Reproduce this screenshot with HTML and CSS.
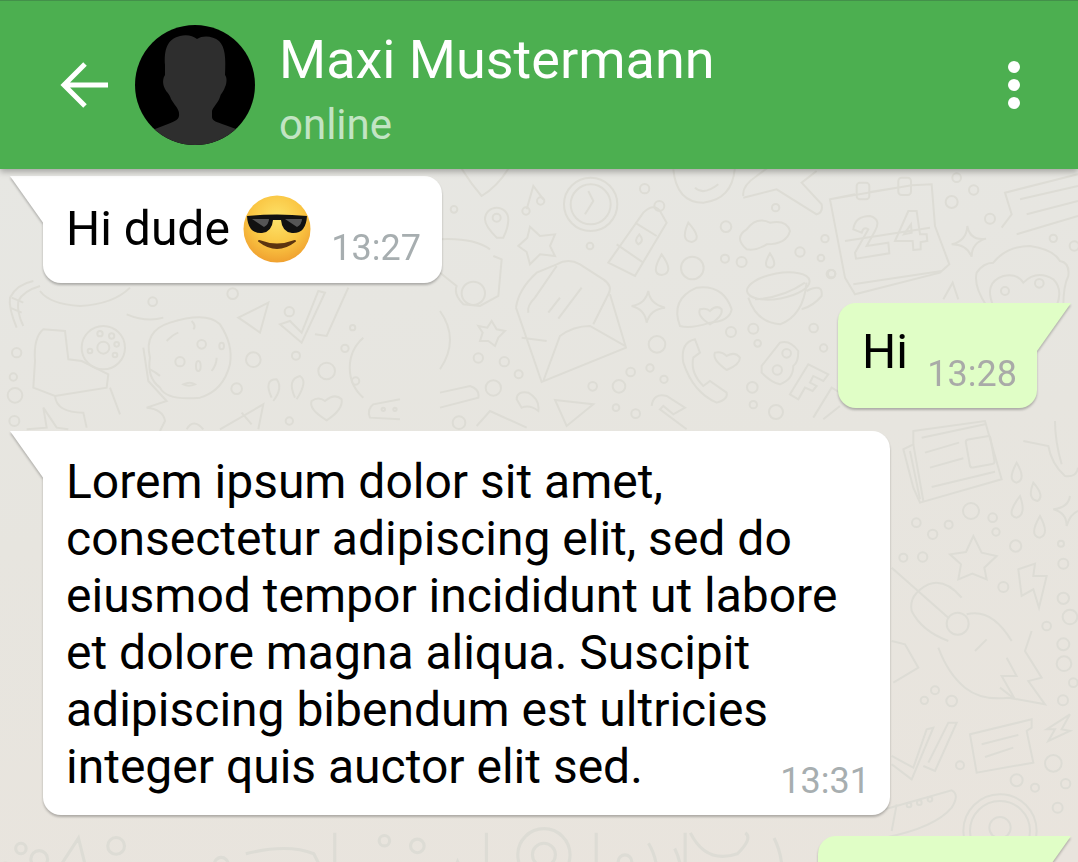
FILE: index.html
```html
<!DOCTYPE html>
<html lang="de">
<head>
    <meta charset="UTF-8">
    <meta name="viewport" content="width=device-width, initial-scale=1.0">
    <title>Maxi Mustermann</title>
    <link rel="stylesheet" href="styles.css">
</head>
<body>
    <header class="topbar">
        <svg class="back-icon" width="50" height="50" viewBox="0 0 50 50">
            <path d="M48 25H5M25 4L4 25l21 21" fill="none" stroke="#fff" stroke-width="5"/>
        </svg>
        <svg class="avatar" width="120" height="120" viewBox="0 0 120 120">
            <defs><clipPath id="avatarClip"><circle cx="60" cy="60" r="60"/></clipPath></defs>
            <circle cx="60" cy="60" r="60" fill="#000"/>
            <path clip-path="url(#avatarClip)" fill="#2e2e2e" d="M30 40C29 25 32 14 45 11C52 9 58 11 62 14C68 10 78 11 84 16C90 22 91 32 90 50C92 52 92 58 90 62C88 68 86 68 85 72C83 78 78 82 77 86V92C77 96 82 97 90 100L101 104L120 120H0L20 104L33 99C40 96 45 95 44 88C44 84 38 78 36 74C34 68 32 68 30 64C27 58 28 53 30 50Z"/>
        </svg>
        <div class="contact">
            <div class="contact-name">Maxi Mustermann</div>
            <div class="contact-status">online</div>
        </div>
        <div class="menu-dots"><span></span><span></span><span></span></div>
    </header>

    <main class="chat">
        <!-- Hintergrundmuster -->
        <svg class="wallpaper" width="1078" height="694" viewBox="0 168 1078 694" fill="none" stroke="#dddcd5" stroke-width="6">
            <g transform="translate(440 165) scale(.3333)">
                <path d="M228 425L305 648L558 545L510 385M245 515L320 525M310 645L360 510Q400 480 450 480L555 540M228 425Q235 370 290 320L350 295Q385 275 420 295L490 340Q520 360 505 385L460 475M265 440Q260 420 285 395L350 300M325 440L360 395M355 458L425 365"/>
                <path d="M270 182L300 210L345 205L330 240L345 270L300 265L270 295L260 258L235 240L262 215Z"/>
                <path d="M155 465L170 490L195 495L175 515L165 540L145 525L120 525L128 500L115 480L142 485Z"/>
                <circle cx="452" cy="115" r="80"/><circle cx="452" cy="115" r="60"/>
                <path d="M445 75L460 105L435 145M260 130L280 60L310 100"/>
                <circle cx="258" cy="135" r="11"/><circle cx="302" cy="105" r="11"/>
                <path d="M170 215Q135 180 135 160a35 35 0 1 1 70 0Q205 185 190 215Z"/><circle cx="170" cy="155" r="12"/>
                <path d="M505 290L610 140Q640 110 660 135L680 170L585 330ZM530 235L610 290M585 170L650 210M598 205Q580 225 595 235Q615 225 598 205Z"/>
                <circle cx="658" cy="120" r="15"/>
                <path d="M745 170Q720 225 755 228Q790 220 745 170ZM665 265Q630 325 665 327Q705 320 665 265ZM990 262Q965 305 992 305Q1015 300 990 262Z"/>
                <path d="M920 250Q880 215 920 190Q950 150 990 170Q1040 160 1050 195Q1040 235 980 235Q950 255 920 250Z"/>
                <ellipse cx="1015" cy="360" rx="95" ry="38" transform="rotate(-10 1015 360)"/>
                <path d="M925 395Q950 470 1020 475Q1090 450 1100 350M1100 375Q1150 350 1145 390Q1120 420 1085 430M945 400Q1030 395 1095 350"/>
                <path d="M625 375Q630 415 675 425Q630 430 620 470Q615 430 575 420Q615 415 625 375Z"/>
                <path d="M720 480Q690 400 770 365Q850 355 875 430Q870 465 810 470Q750 490 720 480Z"/>
                <path d="M810 475Q770 450 780 430Q800 425 810 435Q830 415 845 430Q850 450 810 475Z"/>
                <path d="M765 520Q720 530 730 590Q760 680 830 710Q865 700 860 680L810 645L790 660Q750 620 760 575L780 560Z"/>
                <path d="M860 612Q815 580 825 560Q845 555 860 570Q885 555 900 575Q900 595 860 612Z"/>
                <path d="M965 600L1020 530Q1050 520 1075 555Q1075 590 1060 600Q1060 640 1020 655Q995 650 965 620Z"/><circle cx="1040" cy="562" r="13"/><circle cx="1012" cy="612" r="14"/>
                <path d="M1050 685L1105 595L1165 625L1150 645L1120 630L1110 650L1130 660L1118 675L1095 665L1075 700Z"/>
                <path d="M1120 755L1175 665L1200 680M1150 760L1200 720"/>
                <path d="M0 680L90 660Q120 670 115 695L0 725M230 700Q230 675 265 680Q300 700 295 735Q270 715 245 725ZM345 702L460 715L380 780Z"/>
                <path d="M635 720Q640 680 680 690L735 725L700 745L670 720L660 730L740 790"/>
                <path d="M0 220Q100 215 150 250M160 270L185 280L175 390L120 420L70 415Q40 385 50 360L0 320"/><circle cx="100" cy="382" r="35"/>
                <path d="M110 780L150 735L260 785M0 435Q60 520 0 610"/>
                <path d="M60 0Q90 50 125 90Q175 60 210 0M700 10Q710 110 790 110Q880 100 885 0M765 65Q790 90 835 55M910 90Q905 60 950 30L990 0M910 95L1010 70L1130 145Q1150 140 1145 115L1085 50L1130 15"/>
                <g>
                    <circle cx="42" cy="130" r="10"/><circle cx="614" cy="68" r="14"/><circle cx="450" cy="240" r="10"/><circle cx="858" cy="182" r="16"/><circle cx="1155" cy="218" r="11"/><circle cx="1080" cy="258" r="14"/><circle cx="855" cy="278" r="12"/><circle cx="905" cy="288" r="15"/><circle cx="1143" cy="276" r="10"/><circle cx="1173" cy="324" r="13"/><circle cx="1007" cy="125" r="11"/>
                    <circle cx="757" cy="306" r="34"/><circle cx="651" cy="535" r="25"/><circle cx="873" cy="498" r="15"/><circle cx="940" cy="488" r="15"/><circle cx="1121" cy="486" r="13"/><circle cx="953" cy="532" r="10"/><circle cx="1151" cy="546" r="11"/>
                    <circle cx="115" cy="576" r="14"/><circle cx="193" cy="587" r="14"/><circle cx="236" cy="625" r="12"/><circle cx="160" cy="666" r="23"/><circle cx="458" cy="661" r="13"/><circle cx="537" cy="661" r="19"/><circle cx="572" cy="618" r="13"/><circle cx="630" cy="606" r="11"/><circle cx="672" cy="640" r="11"/><circle cx="528" cy="725" r="10"/><circle cx="587" cy="743" r="13"/><circle cx="57" cy="770" r="19"/><circle cx="937" cy="664" r="16"/><circle cx="940" cy="716" r="11"/><circle cx="1008" cy="738" r="21"/>
                </g>
            </g>
            <g transform="translate(830 165) scale(.3333)">
                <path d="M0 100L75 85M120 78L200 65M245 58L305 55L315 180L358 295L330 320L75 385L45 335L0 100ZM45 225L300 185M70 355L335 315"/>
                <rect x="80" y="50" width="38" height="50" rx="10"/><rect x="205" y="35" width="38" height="52" rx="10"/>
                <path d="M70 190Q75 150 120 150Q155 160 135 195L110 240L175 230L178 262L78 278L75 260L115 190Q100 180 95 200ZM195 225L235 135L260 135L270 205L290 205L292 225L272 228L272 250L250 252L248 225ZM222 205L245 200L243 175Z"/>
                <path d="M412 180Q420 225 468 218Q425 230 425 272Q410 235 365 235Q410 225 412 180Z"/>
                <path d="M515 185L545 145L525 80L744 25M560 205L744 150M570 100L744 60M590 145L744 105Z"/>
                <path d="M470 420Q430 360 440 320Q460 290 490 290Q530 240 600 240Q670 250 690 285Q720 290 715 330Q700 360 700 420M490 420Q460 350 520 330Q560 320 580 350Q620 310 670 340Q700 370 680 420"/>
                <circle cx="525" cy="375" r="12"/><circle cx="628" cy="352" r="13"/>
                <path d="M340 400L368 350L385 400"/>
                <circle cx="365" cy="108" r="18"/><circle cx="431" cy="72" r="14"/><circle cx="480" cy="158" r="15"/><circle cx="380" cy="35" r="13"/><circle cx="670" cy="217" r="11"/><circle cx="733" cy="240" r="14"/><circle cx="5" cy="323" r="11"/>
            </g>
            <g transform="translate(885 420) scale(.3333)">
                <path d="M85 30L300 0L350 175L105 245L85 200L55 85L85 70Z"/>
                <path d="M110 50L300 10M120 95L222 65M135 140L235 112M140 198L330 152M85 70L115 240M75 90L105 235"/>
                <rect x="248" y="50" width="75" height="85" rx="8" transform="rotate(-10 285 92)"/>
                <path d="M395 125Q365 180 395 185Q425 175 395 125ZM405 225Q360 285 395 290Q425 280 405 225ZM445 185Q425 235 458 240Q480 225 445 185ZM465 285Q430 345 465 350Q495 340 465 285Z"/>
                <path d="M415 60L490 75Q500 130 540 165Q575 170 579 140M510 0Q510 60 530 130"/>
                <path d="M555 225Q550 260 505 265Q545 275 545 315Q555 280 579 270"/>
                <path d="M265 345L290 395L335 405L298 440L305 475L262 458L220 475L228 430L195 400L243 393Z"/>
                <path d="M400 445L450 428L445 465L485 465L462 560L445 505L410 525Z"/>
                <path d="M20 440L190 590M130 490Q70 520 80 570Q110 630 190 660M130 490Q180 470 230 530M245 580Q320 560 380 660"/>
                <circle cx="218" cy="608" r="33"/><circle cx="55" cy="410" r="12"/>
                <circle cx="258" cy="270" r="24"/><circle cx="94" cy="305" r="13"/><circle cx="143" cy="340" r="14"/><circle cx="191" cy="311" r="12"/><circle cx="323" cy="290" r="13"/><circle cx="333" cy="333" r="11"/><circle cx="392" cy="375" r="17"/><circle cx="113" cy="408" r="14"/><circle cx="355" cy="498" r="15"/><circle cx="528" cy="368" r="9"/><circle cx="535" cy="428" r="15"/><circle cx="535" cy="532" r="17"/><circle cx="555" cy="588" r="22"/><circle cx="485" cy="615" r="13"/>
            </g>
            <g transform="translate(885 630) scale(.3333)">
                <path d="M160 50Q190 130 240 170Q290 210 370 200L480 220L430 150L470 140L420 60L440 0M270 60L305 25M345 170L390 205L350 135L395 135L365 80"/>
                <path d="M25 155L100 110L60 40L20 30"/>
                <path d="M20 400L80 445L145 290L125 295L85 410L20 375M115 405L150 420L215 275L190 275L130 395"/>
                <path d="M255 310L440 265L440 290L425 300L445 395L275 425Z"/>
                <path d="M290 340L400 312M300 378L385 350"/>
                <path d="M485 295L555 250L530 295L555 300L490 330L510 295Z"/>
                <path d="M0 535L200 478Q225 490 200 530Q150 590 0 620M35 520L20 600"/>
                <circle cx="72" cy="522" r="7"/><circle cx="103" cy="515" r="7"/><circle cx="135" cy="505" r="7"/>
                <circle cx="345" cy="600" r="110"/><circle cx="345" cy="600" r="90"/><circle cx="345" cy="590" r="32"/>
                <circle cx="535" cy="40" r="18"/><circle cx="537" cy="98" r="22"/><circle cx="565" cy="155" r="13"/><circle cx="534" cy="208" r="15"/><circle cx="150" cy="178" r="12"/><circle cx="118" cy="208" r="11"/><circle cx="200" cy="210" r="16"/><circle cx="225" cy="403" r="12"/><circle cx="395" cy="448" r="18"/><circle cx="450" cy="470" r="12"/><circle cx="505" cy="397" r="25"/><circle cx="542" cy="458" r="14"/><circle cx="518" cy="530" r="15"/>
            </g>
            <g transform="translate(0 280) scale(.3333)">
                <path d="M50 140Q25 80 30 50Q50 10 100 0M70 135Q50 95 55 60Q70 30 120 15M30 80L65 95M35 50L70 65"/>
                <path d="M120 30Q150 70 240 75Q340 70 390 20M130 145Q100 170 105 240L100 320L165 345L320 320L325 280L245 240L205 235L195 150Z"/>
                <circle cx="310" cy="200" r="65"/><circle cx="310" cy="200" r="18"/><circle cx="300" cy="158" r="8"/><circle cx="335" cy="165" r="8"/><circle cx="350" cy="190" r="7"/><circle cx="270" cy="210" r="7"/><circle cx="345" cy="222" r="7"/>
                <path d="M165 345Q170 395 250 395L260 440M330 320L360 400M380 100Q440 125 490 110M430 200L445 300L500 360L440 380Q490 385 495 420L480 450"/>
                <path d="M450 230Q430 150 510 125Q620 90 660 130Q700 190 690 250Q670 330 600 350Q500 360 480 320Q440 290 450 230Z"/>
                <path d="M500 180Q520 160 535 155M450 265Q470 275 480 285M575 120Q590 135 580 145M635 270Q650 250 650 230"/><circle cx="605" cy="190" r="13"/><circle cx="540" cy="242" r="14"/><ellipse cx="595" cy="255" rx="7" ry="15"/><ellipse cx="665" cy="195" rx="7" ry="10"/><path d="M550 310Q570 300 585 310Q565 318 550 310Z"/>
                <path d="M715 110L805 65L780 155L745 130Z"/>
                <path d="M840 130L905 185L975 35L955 30L905 155L870 120ZM945 160L980 165L1045 20M1090 170A120 120 0 0 0 1090 350"/>
                <path d="M815 350Q790 295 830 295Q850 320 820 360M885 350Q860 295 900 285Q925 300 890 355"/>
                <path d="M980 418Q925 385 935 360Q955 345 975 360Q1005 335 1025 355Q1030 385 980 418Z"/>
                <path d="M1200 355L1120 370Q1100 385 1110 410L1200 415"/><circle cx="1150" cy="385" r="5"/><circle cx="1185" cy="385" r="5"/>
                <path d="M660 445L790 370L775 445M725 395L755 430"/>
                <path d="M80 445L140 440L130 380L170 440L205 445M560 445Q580 410 610 445"/>
                <circle cx="45" cy="343" r="22"/><circle cx="43" cy="420" r="15"/><circle cx="50" cy="215" r="14"/><circle cx="40" cy="288" r="11"/><circle cx="458" cy="62" r="13"/><circle cx="698" cy="38" r="16"/><circle cx="868" cy="92" r="14"/><circle cx="1058" cy="140" r="8"/><circle cx="760" cy="236" r="22"/><circle cx="888" cy="224" r="12"/><circle cx="980" cy="270" r="25"/><circle cx="1035" cy="202" r="11"/><circle cx="1067" cy="300" r="11"/><circle cx="710" cy="323" r="16"/><circle cx="868" cy="420" r="11"/>
            </g>
            <g transform="translate(0 790) scale(.523)">
                <circle cx="40" cy="110" r="10"/><circle cx="75" cy="130" r="16"/><circle cx="10" cy="148" r="10"/><circle cx="48" cy="180" r="10"/><circle cx="222" cy="105" r="16"/><circle cx="302" cy="150" r="11"/><circle cx="358" cy="148" r="9"/><circle cx="423" cy="140" r="13"/><circle cx="252" cy="172" r="7"/><circle cx="278" cy="195" r="8"/><circle cx="798" cy="105" r="13"/><circle cx="735" cy="95" r="10"/><circle cx="955" cy="185" r="9"/><circle cx="1195" cy="135" r="13"/>
                <path d="M85 190L150 90L165 150L110 190M470 120Q550 100 600 120L620 160M480 215Q460 150 520 150Q580 170 590 216M640 80V216M930 80V216M1140 80V216M1310 80V216M1480 90Q1510 150 1480 216"/>
                <circle cx="1040" cy="122" r="50"/><circle cx="1040" cy="122" r="22"/>
                <path d="M1215 216Q1280 170 1240 100M1270 216Q1320 170 1290 110M860 175L875 135L890 165L900 200L870 205L850 180ZM1320 80Q1350 140 1410 120Q1440 90 1425 80"/>
                <ellipse cx="735" cy="190" rx="13" ry="25"/><ellipse cx="770" cy="185" rx="13" ry="25"/>
            </g>
        </svg>

        <div class="msg msg-in msg-first">
            <div class="msg-row">
                <span class="msg-text">Hi dude</span>
                <svg class="emoji" width="68" height="68" viewBox="0 0 68 68">
                    <defs>
                        <radialGradient id="faceFill" cx="50%" cy="35%" r="70%">
                            <stop offset="0" stop-color="#fde36a"/>
                            <stop offset=".55" stop-color="#fac643"/>
                            <stop offset="1" stop-color="#ee9a2c"/>
                        </radialGradient>
                    </defs>
                    <circle cx="34" cy="34" r="33.5" fill="url(#faceFill)"/>
                    <path d="M4 21Q5 39 19 38Q29 37 30 25H38Q39 37 49 38Q63 39 64 21Q34 18 4 21Z" fill="#111"/>
                    <path d="M9 24H26Q26 29 21 32ZM42 24H59Q59 29 54 32Z" fill="#555"/>
                    <path d="M16 46Q34 60 52 46Q34 53 16 46Z" fill="#5c3410" stroke="#5c3410" stroke-width="2" stroke-linejoin="round"/>
                </svg>
                <span class="msg-time">13:27</span>
            </div>
        </div>

        <div class="msg msg-out">
            <div class="msg-row">
                <span class="msg-text">Hi</span>
                <span class="msg-time msg-time-out">13:28</span>
            </div>
        </div>

        <div class="msg msg-in msg-long">
            <div class="msg-text">Lorem ipsum dolor sit amet,<br>consectetur adipiscing elit, sed do<br>eiusmod tempor incididunt ut labore<br>et dolore magna aliqua. Suscipit<br>adipiscing bibendum est ultricies<br>integer quis auctor elit sed.</div>
            <span class="msg-time msg-time-end">13:31</span>
        </div>

        <div class="msg msg-out msg-cut"></div>
    </main>
</body>
</html>
```

FILE: styles.css
```css
html, body {
    margin: 0;
    height: 862px;
    overflow: hidden;
}
body {
    font-family: Roboto, "Noto Sans", sans-serif;
    background-color: #e8e6e0;
}

/* Kopfzeile */
.topbar {
    position: relative;
    z-index: 2;
    display: flex;
    align-items: center;
    box-sizing: border-box;
    height: 169px;
    padding: 0 0 0 60px;
    background-color: #4caf50;
    border-top: 1px solid #43904a;
    box-shadow: 0 3px 6px rgba(0, 0, 0, 0.28);
}
.back-icon {
    flex: none;
}
.avatar {
    flex: none;
    margin-left: 25px;
}
.contact {
    flex: 1;
    margin-left: 24px;
    margin-top: 6px;
}
.contact-name {
    font-size: 54px;
    line-height: 60px;
    color: #fff;
}
.contact-status {
    margin-top: 13px;
    font-size: 42px;
    line-height: 44px;
    color: #c2e4c3;
}
.menu-dots {
    display: flex;
    flex-direction: column;
    gap: 6px;
    margin-right: 58px;
}
.menu-dots span {
    width: 12px;
    height: 12px;
    border-radius: 50%;
    background-color: #fff;
}

/* Chat */
.chat {
    position: relative;
    display: flex;
    flex-direction: column;
    align-items: flex-start;
    height: 693px;
    overflow: hidden;
    padding-top: 7px;
    box-sizing: border-box;
    background: linear-gradient(172deg, #e7e7e3 0%, #e7e5df 45%, #e9e4dd 100%);
}
.wallpaper {
    position: absolute;
    left: 0;
    top: 0;
}
.msg {
    position: relative;
    flex: none;
    box-sizing: border-box;
    filter: drop-shadow(0 2px 1px rgba(0, 0, 0, 0.25));
}
.msg::before {
    content: "";
    position: absolute;
    top: 0;
    width: 34px;
    height: 48px;
    background-color: inherit;
}
.msg-in {
    margin-left: 43px;
    background-color: #fff;
    border-radius: 0 18px 18px 18px;
}
.msg-in::before {
    left: -33px;
    clip-path: polygon(0 0, 100% 0, 100% 100%);
}
.msg-out {
    align-self: flex-end;
    margin-right: 41px;
    background-color: #e0fec6;
    border-radius: 18px 0 18px 18px;
}
.msg-out::before {
    right: -34px;
    clip-path: polygon(0 0, 100% 0, 0 100%);
}
.msg-first {
    width: 399px;
    height: 107px;
    padding: 24px 21px 0 23px;
}
.msg-out:not(.msg-cut) {
    width: 199px;
    height: 105px;
    margin-top: 20px;
    padding: 20px 20px 0 24px;
}
.msg-long {
    display: grid;
    align-content: start;
    width: 847px;
    height: 384px;
    margin-top: 23px;
    padding: 22px 20px 0 23px;
}
.msg-cut {
    width: 219px;
    height: 60px;
    margin-top: 21px;
}
.msg-row {
    display: flex;
    align-items: flex-start;
}
.msg-text {
    font-size: 48px;
    line-height: 57px;
    color: #000;
    white-space: nowrap;
}
.emoji {
    flex: none;
    margin: -5px 0 0 13px;
}
.msg-time {
    font-size: 36px;
    line-height: 40px;
    color: #a7aeb0;
    margin-left: auto;
    margin-top: 28px;
}
.msg-time-out {
    margin-top: 31px;
    color: #a9aaa8;
}
.msg-time-end {
    justify-self: end;
    margin-top: -34px;
}
```
